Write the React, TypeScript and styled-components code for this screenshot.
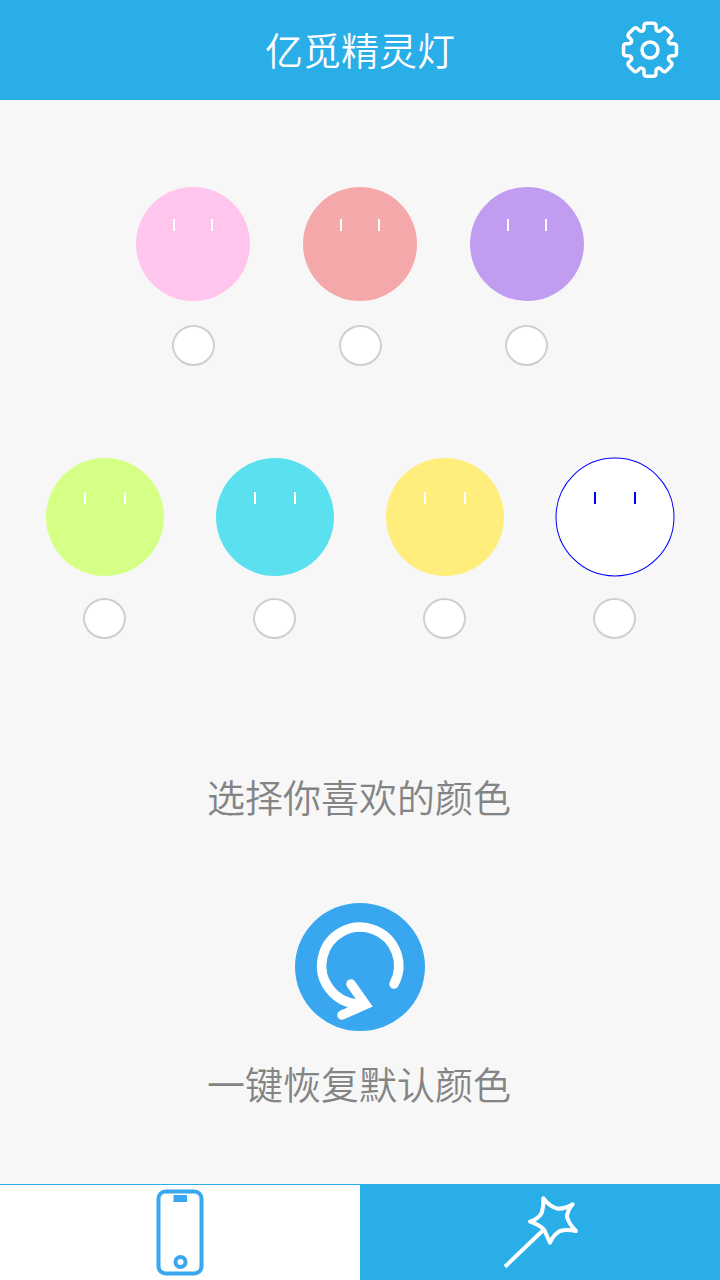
import React from "react";
import styled, { createGlobalStyle } from "styled-components";

const Global = createGlobalStyle`
  html, body { margin: 0; padding: 0; background: #f7f7f7; }
  body { font-family: "Noto Sans CJK SC", "Liberation Sans", sans-serif; }
  #root { width: 720px; height: 1280px; }
`;

const Screen = styled.div`
  width: 720px;
  height: 1280px;
  display: flex;
  flex-direction: column;
  background: #f7f7f7;
  overflow: hidden;
`;

const Header = styled.header`
  height: 100px;
  flex: none;
  background: #29aee8;
  position: relative;
  display: flex;
  justify-content: center;
`;

const Title = styled.h1`
  margin: 0;
  color: #fff;
  font-size: 38px;
  font-weight: 350;
  line-height: 97px;
`;

const GearButton = styled.button`
  position: absolute;
  right: 40px;
  top: 20px;
  width: 60px;
  height: 60px;
  padding: 0;
  border: 0;
  background: none;
  display: block;
  svg { display: block; }
`;

const Main = styled.main`
  flex: 1;
  display: flex;
  flex-direction: column;
  align-items: center;
  padding-top: 87px;
`;

const Row = styled.div<{ $gap: number; $mb: number }>`
  display: flex;
  justify-content: center;
  gap: ${(p) => p.$gap}px;
  margin-bottom: ${(p) => p.$mb}px;
`;

const Swatch = styled.div<{ $gap: number }>`
  display: flex;
  flex-direction: column;
  align-items: center;
  gap: ${(p) => p.$gap}px;
`;

const Face = styled.div<{ $size: number; $color: string; $outline?: string; $eye: number; $eyeTop: number }>`
  position: relative;
  width: ${(p) => p.$size}px;
  height: ${(p) => p.$size}px;
  box-sizing: border-box;
  border-radius: 50%;
  background: ${(p) => p.$color};
  display: flex;
  justify-content: center;
  gap: ${(p) => p.$eye}px;
  padding-top: ${(p) => p.$eyeTop}px;
  ${(p) =>
    p.$outline
      ? `&::after {
          content: "";
          position: absolute;
          inset: 0;
          box-sizing: border-box;
          border: 1px solid ${p.$outline};
          border-radius: 50%;
          transform: scale(1.008);
        }`
      : ""}
`;

const Eye = styled.span<{ $color: string }>`
  display: block;
  width: 2px;
  height: 12px;
  background: ${(p) => p.$color};
`;

const Radio = styled.div<{ $nudge?: boolean }>`
  width: 43px;
  height: 41px;
  box-sizing: border-box;
  border: 2px solid #cfcfcf;
  border-radius: 50%;
  background: #fff;
  margin-right: ${(p) => (p.$nudge ? 1 : 0)}px;
`;

const Caption = styled.p<{ $mb: number }>`
  margin: 0 0 ${(p) => p.$mb}px;
  padding-right: 2px;
  height: 50px;
  line-height: 46px;
  font-size: 38px;
  font-weight: 350;
  color: #848484;
  text-align: center;
`;

const ResetIcon = styled.svg`
  display: block;
  margin-bottom: 29px;
`;

const TabBar = styled.nav`
  flex: none;
  height: 96px;
  display: flex;
`;

const Tab = styled.div<{ $active?: boolean }>`
  flex: 1;
  box-sizing: border-box;
  background: ${(p) => (p.$active ? "#29aee8" : "#fff")};
  border-top: ${(p) => (p.$active ? "none" : "1px solid #29aee8")};
  display: flex;
  justify-content: center;
  svg { display: block; }
`;

const PhoneSvg = styled.svg`
  margin-top: 4px;
`;

const WandSvg = styled.svg`
  margin-top: 10px;
`;

function gearPath(cx: number, cy: number, ro: number, ri: number) {
  const pts: [number, number][] = [];
  for (let i = 0; i < 8; i++) {
    const a = (i * Math.PI) / 4 - Math.PI / 2;
    const dOuter = 0.23;
    const dInner = 0.29;
    const polar = (r: number, t: number): [number, number] => [cx + r * Math.cos(t), cy + r * Math.sin(t)];
    pts.push(polar(ri, a - dInner), polar(ro, a - dOuter), polar(ro, a + dOuter), polar(ri, a + dInner));
  }
  const round = 3;
  let d = "";
  pts.forEach((p, i) => {
    const prev = pts[(i + pts.length - 1) % pts.length];
    const next = pts[(i + 1) % pts.length];
    const toward = (from: [number, number], to: [number, number]) => {
      const dx = to[0] - from[0];
      const dy = to[1] - from[1];
      const len = Math.hypot(dx, dy);
      const k = Math.min(round, len / 2) / len;
      return [from[0] + dx * k, from[1] + dy * k];
    };
    const s = toward(p, prev);
    const e = toward(p, next);
    d += `${i === 0 ? "M" : "L"}${s[0].toFixed(2)} ${s[1].toFixed(2)}Q${p[0].toFixed(2)} ${p[1].toFixed(2)} ${e[0].toFixed(2)} ${e[1].toFixed(2)}`;
  });
  return d + "Z";
}

const topRow = ["#ffc5ec", "#f5a8aa", "#c09df0"];
const bottomRow = ["#d5ff85", "#5ae0ef", "#ffed7c"];

export default function App() {
  return (
    <Screen>
      <Global />
      <Header>
        <Title>亿觅精灵灯</Title>
        <GearButton aria-label="设置">
          <svg width="60" height="60" viewBox="0 0 60 60" fill="none" stroke="#fff" strokeWidth="3.5">
            <path d={gearPath(30, 29.7, 27.2, 20.2)} strokeLinejoin="round" />
            <circle cx="30" cy="30" r="8" />
          </svg>
        </GearButton>
      </Header>
      <Main>
        <Row $gap={53} $mb={92}>
          {topRow.map((c, i) => (
            <Swatch key={c} $gap={24}>
              <Face $size={114} $color={c} $eye={36} $eyeTop={32}>
                <Eye $color="#fff" />
                <Eye $color="#fff" />
              </Face>
              <Radio $nudge={i === 2} />
            </Swatch>
          ))}
        </Row>
        <Row $gap={52} $mb={134}>
          {bottomRow.map((c) => (
            <Swatch key={c} $gap={22}>
              <Face $size={118} $color={c} $eye={38} $eyeTop={34}>
                <Eye $color="#fff" />
                <Eye $color="#fff" />
              </Face>
              <Radio $nudge />
            </Swatch>
          ))}
          <Swatch $gap={22}>
            <Face $size={118} $color="#fff" $outline="#0000ff" $eye={38} $eyeTop={34}>
              <Eye $color="#0000ff" />
              <Eye $color="#0000ff" />
            </Face>
            <Radio $nudge />
          </Swatch>
        </Row>
        <Caption $mb={80}>选择你喜欢的颜色</Caption>
        <ResetIcon width="130" height="128" viewBox="0 0 130 128" fill="none">
          <ellipse cx="65" cy="64" rx="65" ry="64" fill="#39a6f0" />
          <path d="M99 81A38.5 38.5 0 1 0 62 101" stroke="#fff" strokeWidth="9.500" strokeLinecap="round" />
          <polyline points="56,81 70.5,101.500 47,112" stroke="#fff" strokeWidth="9.500" strokeLinecap="round" strokeLinejoin="miter" strokeMiterlimit="6" />
        </ResetIcon>
        <Caption $mb={0}>一键恢复默认颜色</Caption>
      </Main>
      <TabBar>
        <Tab>
          <PhoneSvg width="48" height="88" viewBox="0 0 48 88" fill="none" stroke="#39a6f0" strokeWidth="4">
            <rect x="2.5" y="2.5" width="43" height="82" rx="7" />
            <rect x="17.500" y="6" width="13.500" height="7" fill="#39a6f0" stroke="none" />
            <circle cx="24.500" cy="73" r="5" />
          </PhoneSvg>
        </Tab>
        <Tab $active>
          <WandSvg width="80" height="80" viewBox="0 0 80 80" fill="none" stroke="#fff" strokeWidth="4" strokeLinejoin="round" strokeLinecap="round">
            <path d="M43.3 4.3Q50 13 58 14.8Q66 14.500 72.7 10.3Q67 17 67 23Q69 30 76 37Q67 35 60 37Q54 40 50 48.7Q47 42 44.3 36Q40 31 30 27.700Q38 25 41.700 19Q44 11 43.3 4.3Z" />
            <path d="M5 72.700L43.300 36" strokeLinecap="butt" />
          </WandSvg>
        </Tab>
      </TabBar>
    </Screen>
  );
}
